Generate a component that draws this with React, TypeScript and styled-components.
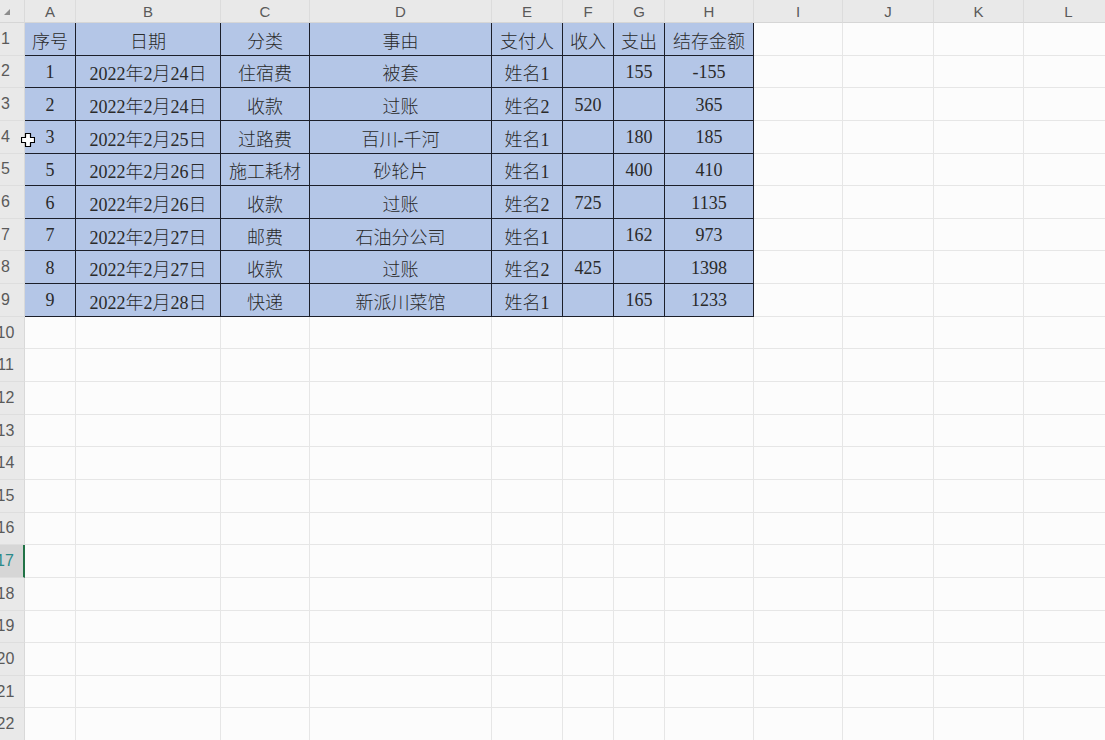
import React from "react";
import styled, { createGlobalStyle, css } from "styled-components";

const Global = createGlobalStyle`
  html, body { margin: 0; padding: 0; background: #fcfcfc; }
  #root { width: 1105px; height: 740px; overflow: hidden; }
`;

const COLS = [25, 51, 145, 89, 182, 71, 51, 51, 89, 89, 91, 90, 90];
const LETTERS = ["A", "B", "C", "D", "E", "F", "G", "H", "I", "J", "K", "L"];
const TOTAL_ROWS = 22;
const SELECTED_ROW = 17;

const DATA: string[][] = [
  ["序号", "日期", "分类", "事由", "支付人", "收入", "支出", "结存金额"],
  ["1", "2022年2月24日", "住宿费", "被套", "姓名1", "", "155", "-155"],
  ["2", "2022年2月24日", "收款", "过账", "姓名2", "520", "", "365"],
  ["3", "2022年2月25日", "过路费", "百川-千河", "姓名1", "", "180", "185"],
  ["5", "2022年2月26日", "施工耗材", "砂轮片", "姓名1", "", "400", "410"],
  ["6", "2022年2月26日", "收款", "过账", "姓名2", "725", "", "1135"],
  ["7", "2022年2月27日", "邮费", "石油分公司", "姓名1", "", "162", "973"],
  ["8", "2022年2月27日", "收款", "过账", "姓名2", "425", "", "1398"],
  ["9", "2022年2月28日", "快递", "新派川菜馆", "姓名1", "", "165", "1233"],
];

const Sheet = styled.div`
  position: relative;
  display: grid;
  grid-template-columns: ${COLS.map((c) => `${c}px`).join(" ")};
  grid-template-rows: 23px repeat(${TOTAL_ROWS}, 32.65px);
  width: 1105px;
  height: 740px;
  overflow: hidden;
  background: #fcfcfc;
`;

const headBase = css`
  display: flex;
  align-items: center;
  justify-content: center;
  background: #e9e9e9;
  color: #5a5a5a;
  font-family: "Liberation Sans", Arial, sans-serif;
  font-size: 15px;
  box-sizing: border-box;
  overflow: hidden;
  white-space: nowrap;
`;

const Corner = styled.div`
  ${headBase};
  position: relative;
  border-right: 1px solid #dadada;
  border-bottom: 1px solid #d6d6d6;
  &::after {
    content: "";
    position: absolute;
    left: 4px;
    top: 9px;
    width: 0;
    height: 0;
    border-left: 6px solid transparent;
    border-bottom: 6px solid #8d8d8d;
  }
`;

const ColHead = styled.div`
  ${headBase};
  border-right: 1px solid #dcdcdc;
  border-bottom: 1px solid #d6d6d6;
`;

const RowHead = styled.div<{ $selected?: boolean }>`
  ${headBase};
  justify-content: center;
  padding-right: 13px;
  font-size: 16px;
  border-bottom: 1px solid #dedede;
  border-right: 1px solid ${(p) => (p.$selected ? "#217346" : "#d9d9d9")};
  background: ${(p) => (p.$selected ? "#d6d6d6" : "#e9e9e9")};
  color: ${(p) => (p.$selected ? "#2a8a8a" : "#5a5a5a")};
  ${(p) => p.$selected && css`border-right-width: 2px;`}
`;

const DataCell = styled.div`
  display: flex;
  align-items: center;
  justify-content: center;
  padding-top: 2px;
  background: #b4c6e7;
  color: #2a2a2a;
  font-family: "Liberation Serif", "Noto Sans CJK SC", serif;
  font-weight: 300;
  font-size: 18px;
  box-sizing: border-box;
  white-space: nowrap;
  overflow: hidden;
  border-right: 1px solid #1c1f2a;
  border-bottom: 1px solid #1c1f2a;
`;

const EmptyCell = styled.div`
  box-sizing: border-box;
  background: #fcfcfc;
  border-right: 1px solid #e6e6e6;
  border-bottom: 1px solid #e6e6e6;
`;

const Cursor = styled.svg`
  position: absolute;
  left: 21px;
  top: 133px;
  width: 14px;
  height: 14px;
  pointer-events: none;
`;

export default function App() {
  const cells: React.ReactNode[] = [];
  cells.push(<Corner key="corner" />);
  LETTERS.forEach((l) => cells.push(<ColHead key={`h-${l}`}>{l}</ColHead>));
  for (let r = 1; r <= TOTAL_ROWS; r++) {
    cells.push(
      <RowHead key={`r-${r}`} $selected={r === SELECTED_ROW}>
        {r}
      </RowHead>
    );
    const rowData = DATA[r - 1];
    LETTERS.forEach((_, c) => {
      if (rowData && c < rowData.length) {
        cells.push(<DataCell key={`c-${r}-${c}`}>{rowData[c]}</DataCell>);
      } else {
        cells.push(<EmptyCell key={`c-${r}-${c}`} />);
      }
    });
  }

  return (
    <>
      <Global />
      <Sheet>
        {cells}
        <Cursor viewBox="0 0 14 14">
          <path
            d="M4.5 0.5 H9.5 V4.5 H13.5 V9.5 H9.5 V13.5 H4.5 V9.5 H0.5 V4.5 H4.5 Z"
            fill="#ffffff"
            stroke="#000000"
            strokeWidth="1.2"
            strokeLinejoin="round"
          />
        </Cursor>
      </Sheet>
    </>
  );
}
